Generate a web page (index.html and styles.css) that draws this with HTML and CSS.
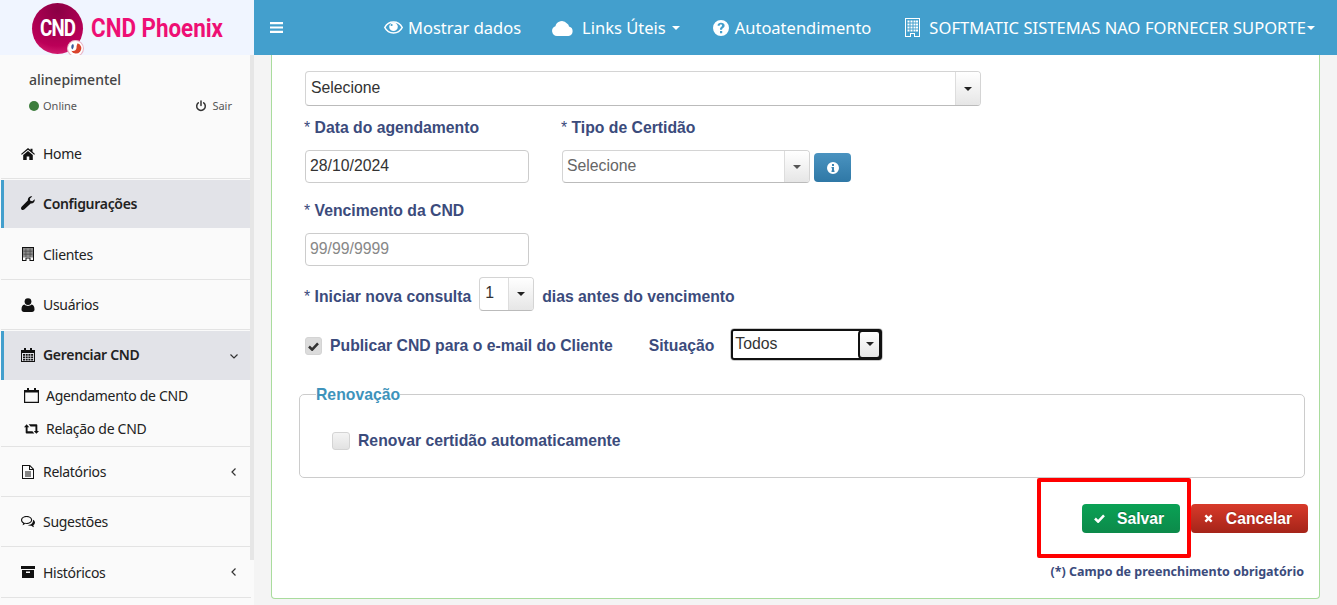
FILE: index.html
```html
<!DOCTYPE html>
<html lang="pt-BR">
<head>
<meta charset="utf-8">
<title>CND Phoenix</title>
<link rel="stylesheet" href="styles.css">
</head>
<body>
<div class="app">
  <header class="topbar">
    <div class="brand">
      <div class="logo"><span class="logo-text">CND</span>
        <svg class="logo-badge" viewBox="0 0 16 16"><circle cx="8" cy="8" r="7.500" fill="#fff" stroke="#e9b7c8"/><path d="M10 3a5 5 0 1 1-6 7c2 1 5 0 5-3 0-1 0-2 1-4z" fill="#d9432c"/><path d="M5 4a4 4 0 0 0 0 5c1-1 2-3 1-5z" fill="#3b5c9c"/></svg>
      </div>
      <span class="brand-name">CND Phoenix</span>
    </div>
    <nav class="nav">
      <svg class="bars" viewBox="0 0 13 11"><path d="M0 0h13v2.200H0zM0 4.400h13v2.200H0zM0 8.800h13V11H0z" fill="#fff"/></svg>
      <a class="nav-item nav-dados"><svg class="nav-ic ic-eye" viewBox="0 0 19 13"><path d="M.8 6.500C2.500 3.200 5.800 1 9.500 1s7 2.200 8.700 5.500c-1.700 3.300-5 5.500-8.700 5.500S2.500 9.800.8 6.500z" fill="none" stroke="#fff" stroke-width="1.600"/><circle cx="9.500" cy="5.800" r="4.300" fill="#fff"/><circle cx="7.600" cy="4" r="1.100" fill="#439fcd"/></svg>Mostrar dados</a>
      <a class="nav-item nav-links"><svg class="nav-ic ic-cloud" viewBox="0 0 21 16"><path fill="#fff" d="M5 16a5 5 0 0 1-1.600-9.700A6.500 6.500 0 0 1 15 3.600a3.600 3.600 0 0 1 2 3A4.800 4.800 0 0 1 16.500 16z"/></svg>Links Úteis<i class="caret"></i></a>
      <a class="nav-item nav-auto"><svg class="nav-ic ic-q" viewBox="0 0 16 16"><path fill="#fff" fill-rule="evenodd" d="M8 0a8 8 0 1 1 0 16A8 8 0 0 1 8 0zM7 11v2.200h2.200V11zM8 2.800c-2 0-3.200 1-3.500 2.800l2 .4c.1-1 .6-1.400 1.400-1.400.7 0 1.200.4 1.200 1 0 .5-.3.800-1 1.300C7.300 7.600 7 8.200 7 9.800h2.100c0-.9.200-1.200 1-1.800 1-.7 1.500-1.400 1.500-2.500 0-1.700-1.500-2.700-3.600-2.700z"/></svg>Autoatendimento</a>
      <a class="nav-item nav-emp"><svg class="nav-ic ic-bld" viewBox="0 0 15 19"><path fill="#fff" fill-rule="evenodd" d="M0 0h15v19H9v-3H6v3H0zM1 1v17h4v-3h5v3h4V1zM2.500 2.500h2v2h-2zM5.500 2.500h2v2h-2zM8.500 2.500h2v2h-2zM11 2.500h2v2h-2zM2.500 5.500h2v2h-2zM5.500 5.500h2v2h-2zM8.500 5.500h2v2h-2zM11 5.500h2v2h-2zM2.500 8.500h2v2h-2zM5.500 8.500h2v2h-2zM8.500 8.500h2v2h-2zM11 8.500h2v2h-2zM2.500 11.500h2v2h-2zM5.500 11.500h2v2h-2zM8.500 11.500h2v2h-2zM11 11.500h2v2h-2z"/></svg>SOFTMATIC SISTEMAS NAO FORNECER SUPORTE<i class="caret tight"></i></a>
    </nav>
  </header>

  <aside class="sidebar">
    <div class="user-panel">
      <div class="user-name">alinepimentel</div>
      <div class="user-status">
        <span class="online"><i class="dot"></i>Online</span>
        <span class="logout"><svg class="ic-power" viewBox="0 0 12 12"><path fill="none" stroke="#333" stroke-width="1.500" stroke-linecap="round" d="M6 1v4.500M3.300 2.800a4.300 4.300 0 1 0 5.400 0"/></svg>Sair</span>
      </div>
    </div>
    <ul class="menu">
      <li class="item"><svg class="ic" viewBox="0 0 14 13"><path d="M7 .5l2.500 2.100V1.200h2v3.100L14 6.400l-.8.900L7 2.200.8 7.300 0 6.400zM2.200 7.600L7 3.600l4.800 4v4.900H8.300V9H5.700v3.500H2.200z"/></svg>Home</li>
      <li class="item active"><svg class="ic" viewBox="0 0 14 14"><path d="M13.700 3.200c.5 2-1.300 4.500-4 4.200L3.200 13.500c-.8.700-2 .6-2.700-.1s-.6-1.900.1-2.600l6.200-6.400C6.500 2 9 0 11.200.4L8.800 2.800l.5 2 2 .5z"/></svg>Configurações</li>
      <li class="item tall"><svg class="ic" viewBox="0 0 12 14"><path fill-rule="evenodd" d="M0 0h12v14H7.500v-2.500h-3V14H0zM1 1v12h2.500v-2.500h5V13H11V1z"/><path fill="#8d8d8d" d="M1 1h10v9.500H1z"/><path d="M3.600 1.500h.7v8.500h-.7zM7.700 1.500h.7v8.500h-.7zM1.500 3.800h9v.7h-9zM1.500 6.800h9v.7h-9z" fill="#444"/></svg>Clientes</li>
      <li class="item"><svg class="ic" viewBox="0 0 13 14"><circle cx="6.500" cy="3.600" r="3.400"/><path d="M3 6.500c1 1 2.200 1.400 3.500 1.400S9 7.500 10 6.500c2 .2 3 2 3 5 0 1.500-1 2.500-2.500 2.500h-8C1 14 0 13 0 11.500c0-3 1-4.800 3-5z"/></svg>Usuários</li>
      <li class="item active open"><svg class="ic" viewBox="0 0 14 14"><path fill-rule="evenodd" d="M3 0h2v2h4V0h2v2h3v12H0V2h3zM1 5v8h12V5zM2 6h2v1.700H2zM4.700 6h2v1.700h-2zM7.400 6h2v1.700h-2zM10.100 6h2v1.700h-2zM2 8.400h2v1.700H2zM4.700 8.400h2v1.700h-2zM7.400 8.400h2v1.700h-2zM10.100 8.400h2v1.700h-2zM2 10.800h2v1.700H2zM4.700 10.800h2v1.700h-2zM7.400 10.800h2v1.700h-2zM10.100 10.800h2v1.700h-2z"/></svg>Gerenciar CND<svg class="chev" viewBox="0 0 10 10"><path d="M1.500 3.500L5 7l3.500-3.500" fill="none" stroke="#333" stroke-width="1.200"/></svg></li>
      <li class="sub">
        <div class="sub-item"><svg class="ic-sub" viewBox="0 0 15 15"><path fill-rule="evenodd" d="M3 0h2v2h5V0h2v2h3v13H0V2h3zM1.200 4.500v9.300h12.600V4.500z"/></svg>Agendamento de CND</div>
        <div class="sub-item"><svg class="ic-sub ic-rep" viewBox="0 0 16 10"><path d="M2.800 0l2.800 3H3.800v4.500H9L11 9.800H2.800a1 1 0 0 1-1-1V3H0zM5 0h8.200a1 1 0 0 1 1 1v6H16l-2.800 3-2.800-3h1.800V2.300H7z"/></svg>Relação de CND</div>
      </li>
      <li class="item"><svg class="ic" viewBox="0 0 12 14"><path fill-rule="evenodd" d="M0 0h8l4 4v10H0zM1 1v12h10V5H7V1zM8 1.500V4h2.500zM3 6.500h6v1H3zM3 8.500h6v1H3zM3 10.500h6v1H3z"/></svg>Relatórios<svg class="chev" viewBox="0 0 10 10"><path d="M6.500 1.500L3 5l3.500 3.500" fill="none" stroke="#333" stroke-width="1.200"/></svg></li>
      <li class="item"><svg class="ic" viewBox="0 0 15 13"><path fill-rule="evenodd" d="M6 0c3.300 0 6 1.900 6 4.300S9.300 8.600 6 8.600c-.5 0-1 0-1.500-.1C3.500 9.300 2.500 9.700 1.400 10c.5-.7.800-1.300.9-2C.9 7.200 0 5.800 0 4.300 0 1.900 2.700 0 6 0zM6 1.200c-2.700 0-4.800 1.400-4.800 3.100 0 1.200 1 2.200 2.300 2.800l-.1.800 1-.6c.5.100 1.100.2 1.600.2 2.700 0 4.800-1.500 4.800-3.200S8.700 1.200 6 1.200zM13 4c1.200.7 2 1.800 2 3 0 1.200-.7 2.300-1.800 2.900.1.800.4 1.400.9 2.100-1.100-.3-2.100-.7-3-1.500-1.400.3-3 0-4.100-.7 3 0 6-1.600 6-5.800z"/></svg>Sugestões</li>
      <li class="item tall"><svg class="ic" viewBox="0 0 14 12"><path fill-rule="evenodd" d="M0 0h14v3H0zM1 4h12v8H1zM5 5.500v1.500h4V5.500z"/></svg>Históricos<svg class="chev" viewBox="0 0 10 10"><path d="M6.500 1.500L3 5l3.500 3.500" fill="none" stroke="#333" stroke-width="1.200"/></svg></li>
    </ul>
    <div class="scroll-thumb"></div>
  </aside>

  <main class="main">
    <div class="panel">
      <div class="field-wide">
        <div class="combo combo-wide"><span class="combo-val">Selecione</span><span class="combo-btn"><i class="arrow"></i></span></div>
      </div>
      <div class="row row-dates">
        <div class="col col-date">
          <label class="lbl"><span class="req">*</span> Data do agendamento</label>
          <input class="input" type="text" value="28/10/2024">
        </div>
        <div class="col col-tipo">
          <label class="lbl"><span class="req">*</span> Tipo de Certidão</label>
          <div class="tipo-line">
            <div class="combo combo-tipo"><span class="combo-val muted">Selecione</span><span class="combo-btn"><i class="arrow grey"></i></span></div>
            <button class="btn-info" type="button"><svg viewBox="0 0 12 12"><path fill="#fff" fill-rule="evenodd" d="M6 0a6 6 0 1 1 0 12A6 6 0 0 1 6 0zM5 2v2h2V2zM4.500 5v1.200H5V8.500h-.5V10h3V8.500H7V5z"/></svg></button>
          </div>
        </div>
      </div>
      <div class="col col-venc">
        <label class="lbl"><span class="req">*</span> Vencimento da CND</label>
        <input class="input" type="text" placeholder="99/99/9999">
      </div>
      <div class="row row-inicio">
        <span class="lbl"><span class="req">*</span> Iniciar nova consulta</span>
        <div class="combo combo-num"><span class="combo-val">1</span><span class="combo-btn"><i class="arrow"></i></span></div>
        <span class="lbl">dias antes do vencimento</span>
      </div>
      <div class="row row-pub">
        <span class="check checked"><svg viewBox="0 0 12 10"><path d="M1 5l3.500 3.500L11 1.500" fill="none" stroke="#333" stroke-width="2.800"/></svg></span>
        <span class="lbl lbl-pub">Publicar CND para o e-mail do Cliente</span>
        <span class="lbl lbl-sit">Situação</span>
        <div class="combo combo-focus"><span class="combo-val">Todos</span><span class="combo-btn"><i class="arrow"></i></span></div>
      </div>
      <fieldset class="renov">
        <legend class="renov-title">Renovação</legend>
        <div class="renov-line">
          <span class="check"></span>
          <span class="lbl">Renovar certidão automaticamente</span>
        </div>
      </fieldset>
      <div class="actions">
        <button class="btn btn-save" type="button"><svg viewBox="0 0 12 10"><path d="M1 5l3.500 3.500L11 1.500" fill="none" stroke="#fff" stroke-width="2.800"/></svg>Salvar</button>
        <button class="btn btn-cancel" type="button"><svg viewBox="0 0 10 10"><path d="M1.500 1.500l7 7M8.500 1.500l-7 7" fill="none" stroke="#fff" stroke-width="2.600"/></svg>Cancelar</button>
      </div>
      <p class="note">(*) Campo de preenchimento obrigatório</p>
      <div class="highlight"></div>
    </div>
  </main>
</div>
</body>
</html>
```

FILE: styles.css
```css
* { box-sizing: border-box; }
html, body { margin: 0; height: 100%; overflow: hidden; }
body { font-family: "Noto Sans", sans-serif; background: #f4f4f4; color: #333; }
.app { display: grid; grid-template-columns: 254px 1fr; grid-template-rows: 55px 1fr; height: 605px; }

/* top bar */
.topbar { grid-column: 1 / 3; display: grid; grid-template-columns: 254px 1fr; }
.brand { background: #f0f5ff; display: flex; align-items: center; padding-left: 32px; gap: 8px; }
.logo { position: relative; width: 51px; height: 51px; margin-top: 1px; border-radius: 50%; background: radial-gradient(circle at 50% 15%, #8a0044, #bb0058 70%, #e5327f); display: flex; align-items: center; justify-content: center; }
.logo-text { color: #fff; font: 700 24px "Roboto", sans-serif; transform: scaleX(.78); letter-spacing: -1px; }
.logo-badge { position: absolute; right: -1px; bottom: -3px; width: 17px; height: 17px; }
.brand-name { color: #ee0f74; font: 700 26px "Roboto", sans-serif; transform-origin: left; transform: scaleX(.86); white-space: nowrap; }
.nav { background: #439fcd; display: flex; align-items: center; color: #fff; padding-left: 16px; font-size: 16.500px; position: relative; }
.bars { width: 13px; height: 11px; }
.nav-item { display: flex; align-items: center; white-space: nowrap; color: #fff; }
.nav-ic { flex: none; }
.nav-dados { margin-left: 101px; }
.ic-eye { width: 19px; height: 13px; margin-right: 5px; }
.nav-links { margin-left: 31px; }
.ic-cloud { width: 21px; height: 16px; margin-right: 9px; }
.nav-auto { margin-left: 33px; }
.ic-q { width: 16px; height: 16px; margin-right: 6px; }
.nav-emp { margin-left: 34px; letter-spacing: .05px; }
.ic-bld { width: 15px; height: 19px; margin-right: 9px; }
.caret { width: 0; height: 0; margin-left: 6px; border: 4px solid transparent; border-top-color: #fff; border-bottom: 0; }
.caret.tight { margin-left: 1px; }

/* sidebar */
.sidebar { background: #fafafa; position: relative; width: 254px; padding-right: 3px; padding-left: 1px; }
.scroll-thumb { position: absolute; right: 0; top: 0; width: 4px; height: 505px; background: #e6e6e6; }
.user-panel { height: 74px; padding: 16px 19px 0 28px; }
.user-name { font-size: 14px; font-weight: 500; color: #444; line-height: 18px; }
.user-status { display: flex; justify-content: space-between; align-items: center; margin-top: 9px; font-size: 11px; color: #555; line-height: 16px; }
.online, .logout { display: flex; align-items: center; }
.dot { width: 10px; height: 10px; border-radius: 50%; background: #3c7d3c; margin-right: 4px; }
.ic-power { width: 12px; height: 12px; margin-right: 5px; }
.menu { list-style: none; margin: 0; padding: 0; }
.item { height: 50px; display: flex; align-items: center; font-size: 14px; letter-spacing: -.3px; padding-left: 20px; border-bottom: 1.500px solid #e3e3e3; color: #222; position: relative; }
.item.tall { height: 51px; }
.item.active { background: linear-gradient(#439fcd, #439fcd) 0 0 / 3px 100% no-repeat, #e2e3e8; background-clip: padding-box; font-weight: 600; border-top: 1px solid transparent; border-bottom: 1px solid transparent; padding-bottom: 2px; }
.item.open { border-bottom: 0; }
.ic { width: 14px; height: 14px; margin-right: 8px; fill: #111; flex: none; }
.chev { position: absolute; right: 12px; top: 20px; width: 10px; height: 10px; }
.sub { height: 67px; border-bottom: 1.500px solid #e3e3e3; }
.sub-item { height: 33px; display: flex; align-items: center; font-size: 14px; letter-spacing: -.3px; padding-left: 23px; color: #222; }
.sub-item:first-child { height: 32px; padding-bottom: 2px; }
.ic-sub { width: 15px; height: 15px; margin-right: 7px; fill: #111; flex: none; }
.ic-rep { height: 10px; }

/* main */
.main { padding: 0 17px 6px 17px; min-width: 0; }
.panel { position: relative; height: 100%; background: #fff; border: 1px solid #a9dc9d; border-top: 0; border-radius: 0 0 4px 4px; padding: 16px 15px 0 33px; }
.lbl { font: 700 15.750px "Liberation Sans", sans-serif; color: #3b4b7c; white-space: nowrap; }
.req { font-weight: 400; }
.row { display: flex; }
.combo { display: flex; align-items: stretch; background: #fff; border: 1px solid #d4d4d4; border-bottom-color: #bbb; border-radius: 4px; font: 400 15.800px "Liberation Sans", sans-serif; color: #333; }
.combo-val { flex: 1; padding: 0 5px; line-height: 31px; }
.combo-val.muted { color: #666; line-height: 29px; padding-left: 4px; }
.combo-btn { width: 25px; display: flex; align-items: center; justify-content: center; background: linear-gradient(#fff, #e6e6e6); border-left: 1px solid #ddd; border-radius: 0 3px 3px 0; }
.arrow { width: 0; height: 0; border: 4px solid transparent; border-top: 4px solid #222; border-bottom: 0; }
.arrow.grey { border-top-color: #555; }
.combo-wide { width: 676px; height: 35px; }
.row-dates { margin-top: 13px; gap: 33px; }
.col { display: flex; flex-direction: column; }
.col .lbl { line-height: 18px; margin-bottom: 13px; margin-left: -1px; }
.col-date { width: 224px; }
.input { width: 224px; height: 33px; padding: 0 4px 1px; border: 1px solid #ccc; border-radius: 4px; font: 400 15.800px "Liberation Sans", sans-serif; color: #333; background: #fff; }
.input::placeholder { color: #888; opacity: 1; }
.tipo-line { display: flex; align-items: flex-end; gap: 4px; height: 33px; }
.combo-tipo { width: 248px; height: 33px; }
.btn-info { width: 37px; height: 29px; margin-bottom: 1px; padding: 0; display: flex; align-items: center; justify-content: center; border: 0; border-radius: 4px; background: linear-gradient(#4a93c0, #2f78a6); }
.btn-info svg { width: 12px; height: 12px; }
.col-venc { margin-top: 19px; }
.row-inicio { align-items: center; margin-top: 11px; height: 34px; margin-left: -1px; }
.row-inicio .lbl { margin-top: 6px; }
.combo-num { width: 55px; height: 34px; margin: 0 8px; }
.combo-num .combo-val { line-height: 30px; }
.row-pub { align-items: center; margin-top: 16px; height: 34px; }
.row-pub .lbl, .row-pub .check { margin-top: 4px; }
.check { width: 18px; height: 18px; flex: none; display: flex; align-items: center; justify-content: center; background: linear-gradient(#f4f4f4, #e2e2e2); border: 1px solid #d4d4d4; border-radius: 3px; }
.check svg { width: 11px; height: 9px; }
.check.checked { width: 17px; background: #dcdcdc; }
.lbl-pub { margin-left: 8px; }
.lbl-sit { margin-left: 36px; }
.combo-focus { width: 153px; height: 33px; margin-left: 16px; border: 1px solid #ccc; padding: 0; outline: 2px solid #111; outline-offset: -3px; }
.combo-focus .combo-val { line-height: 30px; padding-left: 4px; }
.combo-focus .combo-btn { border: 2px solid #111; border-radius: 4px; margin: 1px; width: 23px; }
.renov { margin: 23px -1px 0 -6px; padding: 0 32px 0; height: 94px; border: 1px solid #ccc; border-radius: 5px; }
.renov-title { margin-left: -16px; padding: 2px 0 0; font: 700 15.750px "Liberation Sans", sans-serif; color: #3e93bb; line-height: 18px; }
.renov-line { display: flex; align-items: center; gap: 8px; margin-top: 28px; }
.actions { display: flex; justify-content: flex-end; gap: 11px; margin-top: 26px; margin-right: -4px; }
.btn { height: 29px; border: 0; border-radius: 4px; padding: 0 4px 0 0; display: flex; align-items: center; justify-content: center; font: 700 15.700px "Liberation Sans", sans-serif; color: #fff; text-shadow: 0 -1px 0 rgba(0,0,0,.25); }
.btn svg { width: 11px; height: 9px; margin-right: 12px; }
.btn-save { width: 98px; background: linear-gradient(#0aa155, #0c8a4a); }
.btn-cancel { width: 117px; background: linear-gradient(#d83a2a, #a52419); }
.note { margin: 31px 0 0 0; text-align: right; font-size: 12.500px; font-weight: 700; color: #3b4b7c; line-height: 16px; }
.highlight { position: absolute; left: 765px; top: 423px; width: 154px; height: 80px; border: 4px solid #f00; border-radius: 2px; }
```
